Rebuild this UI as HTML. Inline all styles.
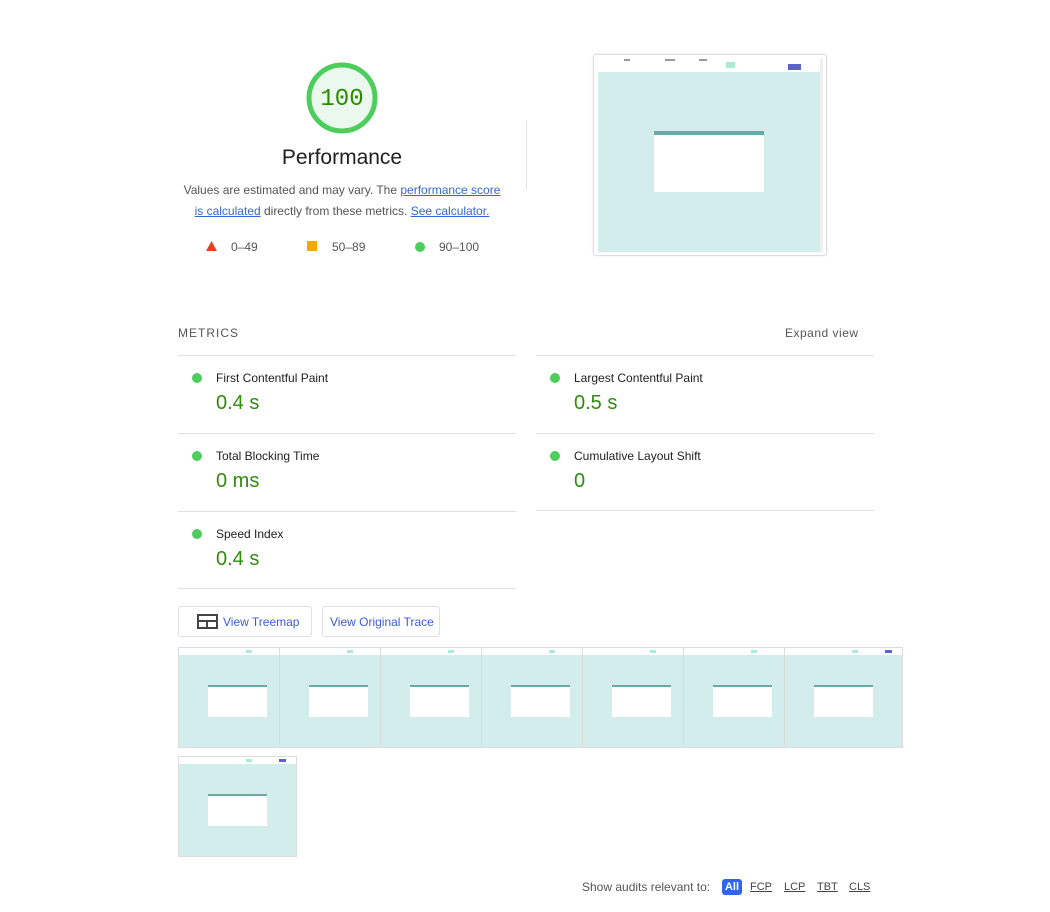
<!DOCTYPE html>
<html><head><meta charset="utf-8"><style>
*{margin:0;padding:0;box-sizing:border-box}
body{width:1050px;height:912px;background:#fff;font-family:"Liberation Sans",Arial,sans-serif;position:relative;overflow:hidden;color:#212121}
.a{position:absolute}
a{color:#3367d6;text-decoration:underline}
.hr{position:absolute;height:1px;background:#e0e0e0}
.dot{position:absolute;width:10px;height:10px;border-radius:50%;background:#4cce5c}
.ml{position:absolute;font-size:12px;color:#212121}
.mv{position:absolute;font-size:20px;color:#318a10}
.fr{position:absolute;width:119px;height:101px;background:#d3ecec;border:1px solid #dcdcdc;overflow:hidden}
.fr .top{position:absolute;left:0;top:0;right:0;height:7px;background:#fff}
.fr .box{position:absolute;left:29px;top:37px;width:59px;height:32px;background:#fff}
.fr .box:before{content:"";position:absolute;left:0;top:0;right:0;height:2px;background:#6aa9a5}
.fr .bt{position:absolute;top:2px;left:67px;width:6px;height:3px;background:#a8ecd8}
.fr .bl{position:absolute;top:2px;left:100px;width:7px;height:3px;background:#5a64c8}
</style></head><body>
<svg class="a" style="left:305px;top:61px" width="74" height="74"><circle cx="37" cy="37" r="33" fill="#eaf8ee" stroke="#4cce5c" stroke-width="5"/></svg>
<div class="a" style="left:305px;top:86px;width:74px;text-align:center;font-family:'Liberation Mono',monospace;font-size:24px;color:#2a8a00">100</div>
<div class="a" style="left:178px;top:146px;width:328px;text-align:center;font-size:21px;color:#212121">Performance</div>
<div class="a" style="left:178px;top:180px;width:328px;text-align:center;font-size:12px;line-height:21px;color:#555">Values are estimated and may vary. The <a>performance score is calculated</a> directly from these metrics. <a>See calculator.</a></div>
<svg class="a" style="left:206px;top:241px" width="11" height="11"><polygon points="5.5,0 11,10 0,10" fill="#e8401c"/></svg>
<div class="a" style="left:231px;top:240px;font-size:12px;color:#555">0–49</div>
<div class="a" style="left:307px;top:241px;width:10px;height:10px;background:#f4a800"></div>
<div class="a" style="left:332px;top:240px;font-size:12px;color:#555">50–89</div>
<div class="dot" style="left:415px;top:242px"></div>
<div class="a" style="left:439px;top:240px;font-size:12px;color:#555">90–100</div>
<div class="a" style="left:526px;top:120px;width:1px;height:70px;background:#e0e0e0"></div>
<div class="a" style="left:593px;top:54px;width:234px;height:202px;border:1px solid #ddd;border-radius:3px;background:#fff;box-shadow:0 0 2px rgba(0,0,0,.1)">
 <div class="a" style="left:4px;top:17px;width:222px;height:180px;background:#d3ecec"></div>
 <div class="a" style="left:226px;top:4px;width:3px;height:193px;background:#eee"></div>
 <div class="a" style="left:132px;top:7px;width:9px;height:6px;background:#a8ecd8"></div>
 <div class="a" style="left:194px;top:9px;width:13px;height:6px;background:#5a64c8"></div>
 <div class="a" style="left:30px;top:4px;width:6px;height:2px;background:#999"></div>
 <div class="a" style="left:71px;top:4px;width:10px;height:2px;background:#999"></div>
 <div class="a" style="left:105px;top:4px;width:8px;height:2px;background:#999"></div>
 <div class="a" style="left:60px;top:76px;width:110px;height:61px;background:#fff"><div class="a" style="left:0;top:0;width:110px;height:4px;background:#6aa9a5"></div></div>
</div>
<div class="a" style="left:178px;top:326px;font-size:12px;letter-spacing:1px;color:#555">METRICS</div>
<div class="a" style="left:785px;top:326px;font-size:12px;letter-spacing:.5px;color:#555">Expand view</div>
<div class="hr" style="left:178px;top:355px;width:338px"></div>
<div class="hr" style="left:536px;top:355px;width:338px"></div>
<div class="dot" style="left:192px;top:373px"></div><div class="ml" style="left:216px;top:371px">First Contentful Paint</div><div class="mv" style="left:216px;top:392px">0.4 s</div>
<div class="dot" style="left:550px;top:373px"></div><div class="ml" style="left:574px;top:371px">Largest Contentful Paint</div><div class="mv" style="left:574px;top:392px">0.5 s</div>
<div class="hr" style="left:178px;top:433px;width:338px"></div>
<div class="hr" style="left:536px;top:433px;width:338px"></div>
<div class="dot" style="left:192px;top:451px"></div><div class="ml" style="left:216px;top:449px">Total Blocking Time</div><div class="mv" style="left:216px;top:470px">0 ms</div>
<div class="dot" style="left:550px;top:451px"></div><div class="ml" style="left:574px;top:449px">Cumulative Layout Shift</div><div class="mv" style="left:574px;top:470px">0</div>
<div class="hr" style="left:178px;top:511px;width:338px"></div>
<div class="hr" style="left:536px;top:510px;width:338px"></div>
<div class="dot" style="left:192px;top:529px"></div><div class="ml" style="left:216px;top:527px">Speed Index</div><div class="mv" style="left:216px;top:548px">0.4 s</div>
<div class="hr" style="left:178px;top:588px;width:338px"></div>
<div class="a" style="left:178px;top:606px;width:134px;height:31px;border:1px solid #e0e0e0;border-radius:3px"></div>
<svg class="a" style="left:197px;top:614px" width="21" height="15"><rect x="1" y="1" width="19" height="13" fill="none" stroke="#444" stroke-width="2"/><rect x="1" y="6" width="19" height="2" fill="#444"/><rect x="9" y="7" width="2" height="7" fill="#444"/></svg>
<div class="a" style="left:223px;top:615px;font-size:12px;color:#3b5bdb">View Treemap</div>
<div class="a" style="left:322px;top:606px;width:118px;height:31px;border:1px solid #e0e0e0;border-radius:3px"></div>
<div class="a" style="left:330px;top:615px;font-size:12px;color:#3b5bdb">View Original Trace</div>
<div class="fr" style="left:178px;top:647px"><div class="top"></div><div class="bt"></div><div class="box"></div></div>
<div class="fr" style="left:279px;top:647px"><div class="top"></div><div class="bt"></div><div class="box"></div></div>
<div class="fr" style="left:380px;top:647px"><div class="top"></div><div class="bt"></div><div class="box"></div></div>
<div class="fr" style="left:481px;top:647px"><div class="top"></div><div class="bt"></div><div class="box"></div></div>
<div class="fr" style="left:582px;top:647px"><div class="top"></div><div class="bt"></div><div class="box"></div></div>
<div class="fr" style="left:683px;top:647px"><div class="top"></div><div class="bt"></div><div class="box"></div></div>
<div class="fr" style="left:784px;top:647px"><div class="top"></div><div class="bt"></div><div class="bl"></div><div class="box"></div></div>
<div class="fr" style="left:178px;top:756px"><div class="top"></div><div class="bt"></div><div class="bl"></div><div class="box"></div></div>
<div class="a" style="left:582px;top:880px;font-size:12px;color:#555">Show audits relevant to:</div>
<div class="a" style="left:722px;top:879px;width:20px;height:16px;background:#2f66e8;border-radius:3px;color:#fff;font-size:11px;font-weight:bold;text-align:center;line-height:16px">All</div>
<div class="a" style="left:750px;top:881px;font-size:11px;color:#444;text-decoration:underline">FCP</div>
<div class="a" style="left:784px;top:881px;font-size:11px;color:#444;text-decoration:underline">LCP</div>
<div class="a" style="left:817px;top:881px;font-size:11px;color:#444;text-decoration:underline">TBT</div>
<div class="a" style="left:849px;top:881px;font-size:11px;color:#444;text-decoration:underline">CLS</div>
</body></html>
